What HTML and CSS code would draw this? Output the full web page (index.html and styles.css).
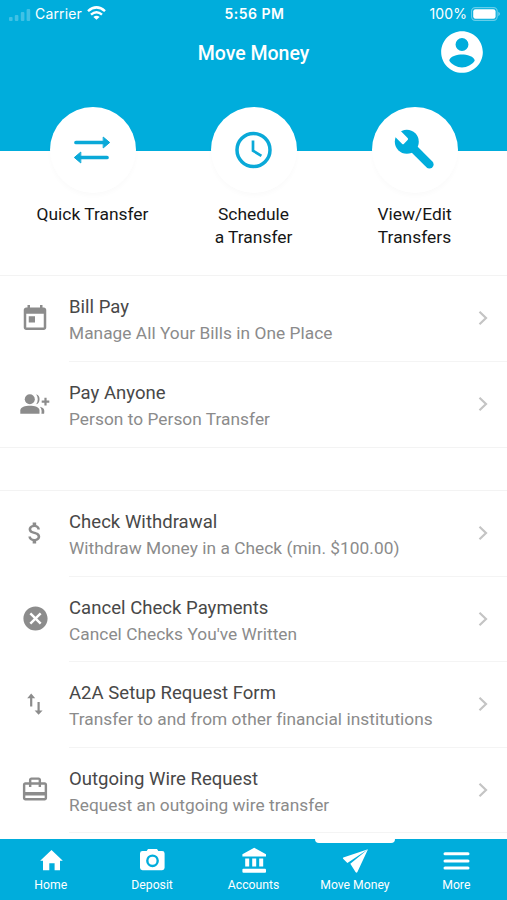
FILE: index.html
```html
<!DOCTYPE html>
<html lang="en">
<head>
<meta charset="utf-8">
<title>Move Money</title>
<link rel="stylesheet" href="styles.css">
</head>
<body>
<div class="app">
  <header class="header">
    <div class="status">
      <div class="carrier">
        <svg class="signal" width="22" height="14" viewBox="0 0 22 14"><rect x="0" y="9" width="3.6" height="4" rx="1"/><rect x="5.8" y="7" width="3.6" height="6" rx="1"/><rect x="11.8" y="4" width="3.6" height="9" rx="1"/><rect x="17.6" y="1" width="3.6" height="12" rx="1"/></svg>
        <span class="carrier-name">Carrier</span>
        <svg class="wifi" width="19" height="14" viewBox="0 0 19 14" fill="none" stroke="#fff" stroke-width="2.5"><path d="M1 5.1Q9.5-2.3 18 5.1"/><path d="M4 8.6q5.5-4.6 11 0"/><path d="M9.5 13.8L6.4 10.9q3.1-2.4 6.2 0z" fill="#fff" stroke="none"/></svg>
      </div>
      <div class="time">5:56 PM</div>
      <div class="power"><span class="percent">100%</span>
        <svg width="29" height="14" viewBox="0 0 29 14"><rect x=".6" y=".6" width="25.6" height="12.8" rx="3.6" fill="none" stroke="#fff" stroke-opacity=".4" stroke-width="1.1"/><rect x="2.2" y="2.2" width="22.4" height="9.6" rx="2.2" fill="#fff"/><path d="M27.4 4.8q3 2.2 0 4.4z" fill="#fff" fill-opacity=".5"/></svg>
      </div>
    </div>
    <div class="titlebar">
      <h1 class="title">Move Money</h1>
      <svg class="avatar" width="50" height="50" viewBox="0 0 24 24" fill="#fff"><path d="M12 2C6.48 2 2 6.48 2 12s4.48 10 10 10 10-4.48 10-10S17.52 2 12 2zm0 3.300a3.100 3.100 0 1 1 0 6.200 3.100 3.100 0 0 1 0-6.200zm0 14.100c-2.500 0-4.800-1.300-6.100-3.200 0-2.100 4-3 6.100-3s6.100.9 6.100 3c-1.300 1.900-3.600 3.200-6.100 3.200z"/></svg>
    </div>
  </header>

  <section class="actions">
    <div class="action">
      <div class="disc"><svg width="42" height="42" viewBox="0 0 42 42" fill="#0aa9d8" stroke="#0aa9d8" stroke-linejoin="round" stroke-linecap="round"><path d="M5 13.500h29M8 28.500h28" stroke-width="3.700" fill="none"/><path d="M32.500 8.300l6.200 5.200-6.200 5.200zM9.500 23.300l-6.200 5.200 6.200 5.200z" stroke-width="1"/></svg></div>
      <div class="action-label">Quick Transfer</div>
    </div>
    <div class="action">
      <div class="disc"><svg width="42" height="42" viewBox="0 0 42 42" fill="none" stroke="#0aa9d8"><circle cx="21.500" cy="21" r="16.500" stroke-width="3.500"/><path d="M21 11.500v10.200l8.400 5.100" stroke-width="2.700"/></svg></div>
      <div class="action-label">Schedule<br>a Transfer</div>
    </div>
    <div class="action">
      <div class="disc"><svg class="wrench" width="42" height="42" viewBox="0 0 42 42" fill="#00addc"><path d="M15 15l20.400 20.400" stroke="#00addc" stroke-width="8.400" stroke-linecap="round"/><circle cx="12.800" cy="12.800" r="12"/><path d="M-2 4.700L.8 7.500 8 14.700q1 1 2 0l3.600-3.800q.9-1 0-2L7 2.200 3-2z" fill="#fff"/></svg></div>
      <div class="action-label">View/Edit<br>Transfers</div>
    </div>
  </section>

  <main class="lists">
    <ul class="list">
      <li class="row">
        <div class="icon"><svg width="30" height="30" viewBox="0 0 24 24"><path d="M19 3h-1V1h-2v2H8V1H6v2H5c-1.11 0-2 .9-2 2v14c0 1.1.89 2 2 2h14c1.1 0 2-.9 2-2V5c0-1.1-.9-2-2-2zm0 16H5V8h14v11zM7 10h5v5H7z" transform="translate(0 .5)"/></svg></div>
        <div class="text"><div class="name">Bill Pay</div><div class="desc">Manage All Your Bills in One Place</div></div>
        <svg class="chevron" width="10" height="16" viewBox="0 0 10 16"><path d="M1.500 1.800L8 8l-6.500 6.200"/></svg>
      </li>
      <li class="row">
        <div class="icon"><svg width="30" height="22" viewBox="0 0 30 22"><circle cx="9.800" cy="6.200" r="5"/><path d="M.3 20.700v-3.200c0-3.300 5-4.700 9.600-4.700s9.600 1.400 9.600 4.700v3.200z"/><path d="M16.200 1.200c4.500.8 4.500 9.300 0 10.100 2.100-3 2.100-7.100 0-10.100zM19.900 13.700c4 .9 5 3 4.200 7h-2.700c.5-3 .2-5-1.500-7z"/><path d="M21.700 8.600h7.600M25.500 4.800v7.600" fill="none" stroke="#8c8c8c" stroke-width="2.2"/></svg></div>
        <div class="text"><div class="name">Pay Anyone</div><div class="desc">Person to Person Transfer</div></div>
        <svg class="chevron" width="10" height="16" viewBox="0 0 10 16"><path d="M1.500 1.800L8 8l-6.500 6.200"/></svg>
      </li>
    </ul>
    <ul class="list more">
      <li class="row">
        <div class="icon"><svg width="28" height="28" viewBox="0 0 24 24"><path d="M11.8 10.9c-2.27-.59-3-1.2-3-2.15 0-1.09 1.01-1.85 2.7-1.85 1.78 0 2.44.85 2.5 2.1h2.21c-.07-1.72-1.12-3.3-3.21-3.81V3h-3v2.16c-1.94.42-3.5 1.68-3.5 3.61 0 2.31 1.91 3.46 4.7 4.13 2.5.6 3 1.48 3 2.41 0 .69-.49 1.79-2.7 1.79-2.06 0-2.87-.92-2.98-2.1h-2.2c.12 2.19 1.76 3.42 3.68 3.83V21h3v-2.15c1.95-.37 3.5-1.5 3.5-3.55 0-2.84-2.43-3.81-4.7-4.4z"/></svg></div>
        <div class="text"><div class="name">Check Withdrawal</div><div class="desc">Withdraw Money in a Check (min. $100.00)</div></div>
        <svg class="chevron" width="10" height="16" viewBox="0 0 10 16"><path d="M1.500 1.800L8 8l-6.500 6.200"/></svg>
      </li>
      <li class="row">
        <div class="icon"><svg width="29" height="29" viewBox="0 0 24 24"><path d="M12 2C6.47 2 2 6.47 2 12s4.47 10 10 10 10-4.47 10-10S17.53 2 12 2zm5 13.59L15.59 17 12 13.41 8.41 17 7 15.59 10.59 12 7 8.41 8.41 7 12 10.59 15.59 7 17 8.41 13.41 12 17 15.59z"/></svg></div>
        <div class="text"><div class="name">Cancel Check Payments</div><div class="desc">Cancel Checks You've Written</div></div>
        <svg class="chevron" width="10" height="16" viewBox="0 0 10 16"><path d="M1.500 1.800L8 8l-6.500 6.200"/></svg>
      </li>
      <li class="row">
        <div class="icon"><svg width="18" height="24" viewBox="0 0 18 24"><path d="M5.200 3.500v11M12.600 10v10" fill="none" stroke="#8c8c8c" stroke-width="2.2"/><path d="M5.200 1.500l4 4.800h-8zM12.600 22.700l-4-4.200h8z"/></svg></div>
        <div class="text"><div class="name">A2A Setup Request Form</div><div class="desc">Transfer to and from other financial institutions</div></div>
        <svg class="chevron" width="10" height="16" viewBox="0 0 10 16"><path d="M1.500 1.800L8 8l-6.500 6.200"/></svg>
      </li>
      <li class="row">
        <div class="icon"><svg width="30" height="29" viewBox="0 0 24 24"><path d="M20 6h-3V4c0-1.11-.89-2-2-2H9c-1.11 0-2 .89-2 2v2H4c-1.11 0-2 .89-2 2v11c0 1.11.89 2 2 2h16c1.11 0 2-.89 2-2V8c0-1.11-.89-2-2-2zM9 4h6v2H9V4zm11 15H4v-2h16v2zm0-5H4V8h3v2h2V8h6v2h2V8h3v6z"/></svg></div>
        <div class="text"><div class="name">Outgoing Wire Request</div><div class="desc">Request an outgoing wire transfer</div></div>
        <svg class="chevron" width="10" height="16" viewBox="0 0 10 16"><path d="M1.500 1.800L8 8l-6.500 6.200"/></svg>
      </li>
    </ul>
  </main>

  <nav class="nav">
    <div class="tab"><svg width="28" height="28" viewBox="0 0 28 28"><path d="M14.500 3l11.300 10.800h-2.800v9.400h-5.400v-7h-5.300v7H6v-9.400H3.200z"/></svg><span>Home</span></div>
    <div class="tab"><svg width="28" height="28" viewBox="0 0 28 28"><path fill-rule="evenodd" d="M10 2h9l1.300 2h3.800q2.500 0 2.500 2.400v14.400q0 2.400-2.500 2.400H4.500q-2.500 0-2.500-2.400V6.400Q2 4 4.500 4h4.200zM14.500 7.400a6.400 6.400 0 1 0 0 12.800 6.400 6.400 0 0 0 0-12.800z"/><circle cx="14.500" cy="13.800" r="4"/></svg><span>Deposit</span></div>
    <div class="tab"><svg width="28" height="28" viewBox="0 0 28 28"><path d="M14.200.8L26 7.200v2.300H2.400V7.200zM5.200 11.500h4v8h-4zM12.200 11.500h4v8h-4zM19.200 11.500h4v8h-4z"/><rect x="2.400" y="21.800" width="23.600" height="4" rx="1"/></svg><span>Accounts</span></div>
    <div class="tab active"><svg width="28" height="28" viewBox="0 0 28 28"><path d="M27 2.200L2.300 10.400q-.8.500-.2 1.300l4.300 4.300zM27 2.200L9.300 16.700l5.400 8.600q1 .8 1.700-.2z"/></svg><span>Move Money</span></div>
    <div class="tab"><svg width="28" height="28" viewBox="0 0 28 28"><path d="M3 6.800h23M3 14h23M3 21.100h23" stroke="#fff" stroke-width="3" stroke-linecap="round"/></svg><span>More</span></div>
  </nav>
</div>
</body>
</html>
```
FILE: styles.css
```css
* { box-sizing: border-box; }
body { margin: 0; font-family: Roboto, "Liberation Sans", sans-serif; background: #fff; }
svg { display: block; flex: none; }

.app { width: 507px; height: 900px; display: flex; flex-direction: column; overflow: hidden; }

.header { height: 151px; flex: none; background: #00addc; color: #fff; }
.status {
  display: grid; grid-template-columns: 1fr auto 1fr; align-items: center;
  height: 27px; padding: 1px 7px 0 9px;
  font-family: Inter, "Liberation Sans", sans-serif; font-size: 14px; line-height: 18px;
}
.carrier { display: flex; align-items: center; }
.signal { fill: rgba(255, 255, 255, .25); margin-top: 1px; }
.carrier-name { margin: 0 5px 0 4px; letter-spacing: .15px; }
.wifi { margin-top: -2px; }
.time { font-weight: 600; letter-spacing: .5px; }
.power { display: flex; align-items: center; justify-content: flex-end; gap: 4px; }
.percent { letter-spacing: .1px; }
.titlebar { display: grid; grid-template-columns: 1fr auto 1fr; align-items: center; height: 50px; padding: 0 20.500px; }
.title { grid-column: 2; margin: 3px 0 0; font-size: 19.500px; line-height: 24px; font-weight: 500; }
.avatar { justify-self: end; }

.actions { display: flex; flex: none; height: 124px; padding: 0 12px; }
.action { flex: 1; display: flex; flex-direction: column; align-items: center; margin-top: -44px; }
.disc {
  width: 86px; height: 86px; flex: none; border-radius: 50%; background: #fff;
  display: flex; align-items: center; justify-content: center;
  box-shadow: 0 3px 5px rgba(0, 0, 0, .018);
}
.disc svg { margin-right: 1px; }
.disc .wrench { margin-right: 0; }
.action-label { margin-top: 10px; font-size: 17.400px; line-height: 23px; text-align: center; color: #161616; }

.lists { flex: 1; min-height: 0; overflow: hidden; }
.list { list-style: none; margin: 0; padding: 0; border-top: 1px solid #f3f3f3; border-bottom: 1px solid #f3f3f3; }
.more { margin-top: 42px; border-bottom: 0; }
.row { display: grid; grid-template-columns: 69px 1fr 30px; height: 85.500px; align-items: stretch; }
.icon { display: flex; align-items: center; justify-content: center; padding-left: 1px; padding-bottom: 1px; fill: #8c8c8c; }
.text { grid-column: 2 / 4; grid-row: 1; padding-top: 18px; border-bottom: 1px solid #f4f4f4; }
.row:last-child .text { border-bottom-color: transparent; }
.more .row:last-child .text { border-bottom-color: #f4f4f4; }
.name { font-size: 18.550px; line-height: 26px; letter-spacing: .02px; color: #484848; }
.desc { font-size: 17.300px; line-height: 26px; letter-spacing: .04px; color: #8b8b8b; white-space: nowrap; }
.chevron { grid-column: 3; grid-row: 1; align-self: center; margin: 0 0 1px .5px; fill: none; stroke: #c4c4c4; stroke-width: 2.200; }

.nav { flex: none; height: 61px; background: #00addc; display: flex; }
.tab {
  position: relative; flex: 1; display: flex; flex-direction: column; align-items: center;
  padding-top: 8px; color: #fff; fill: #fff; font-size: 12.200px; line-height: 16px;
}
.tab span { margin-top: 2px; white-space: nowrap; }
.active::before {
  content: ""; position: absolute; top: 0; left: 50%; width: 80px; height: 4px;
  margin-left: -39.500px; background: #fff; border-radius: 0 0 4px 4px;
}
```
